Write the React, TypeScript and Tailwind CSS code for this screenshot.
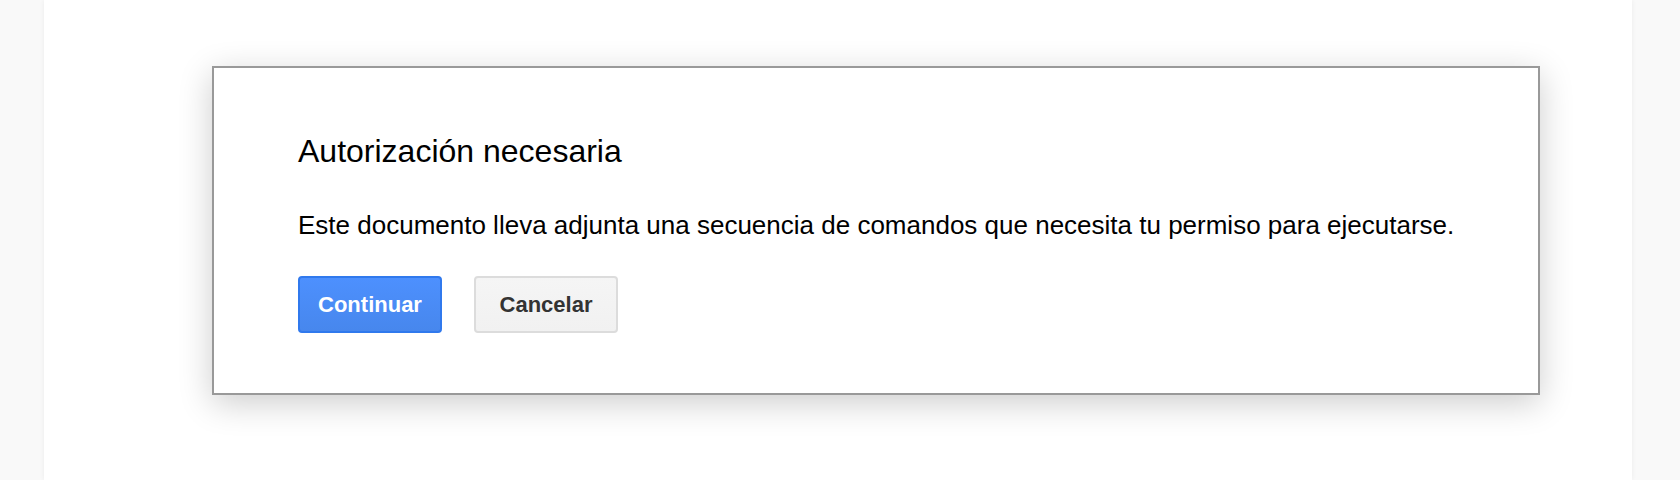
import React from "react";

export default function App() {
  return (
    <div
      className="flex h-[480px] w-[1680px] bg-[#f9f9f9] overflow-hidden"
      style={{ fontFamily: '"Liberation Sans", Arial, sans-serif' }}
    >
      <div className="ml-[44px] h-full w-[1588px] bg-white pl-[168px] pt-[66px] shadow-[0_0_5px_rgba(0,0,0,0.06)]">
        <div className="w-[1328px] border-2 border-[#999999] bg-white pl-[84px] pr-[40px] pt-[63px] pb-[60px] shadow-[0_8px_32px_rgba(0,0,0,0.2)]">
          <h1 className="text-[32px] leading-[40px] font-normal text-[#000]">
            Autorización necesaria
          </h1>
          <p className="mt-[38px] text-[26px] leading-[32px] text-[#000]">
            Este documento lleva adjunta una secuencia de comandos que necesita tu permiso para ejecutarse.
          </p>
          <div className="mt-[35px] flex gap-[32px]">
            <button className="flex h-[57px] w-[144px] items-center justify-center rounded-[4px] border-2 border-[#3079ed] bg-gradient-to-b from-[#4d90fe] to-[#4787ed] text-[22px] font-bold text-white">
              Continuar
            </button>
            <button className="flex h-[57px] w-[144px] items-center justify-center rounded-[4px] border-2 border-[#dcdcdc] bg-gradient-to-b from-[#f5f5f5] to-[#f1f1f1] text-[22px] font-bold text-[#333]">
              Cancelar
            </button>
          </div>
        </div>
      </div>
    </div>
  );
}
